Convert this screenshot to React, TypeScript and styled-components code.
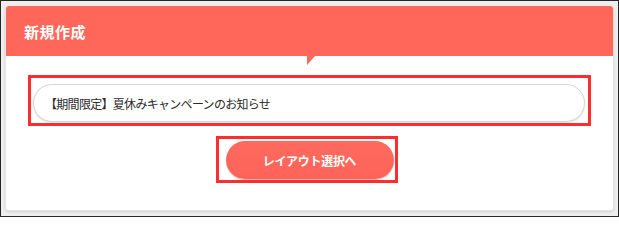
import React from 'react';
import styled, {createGlobalStyle} from 'styled-components';

const GlobalStyle = createGlobalStyle`
    html, body {
        margin: 0;
        padding: 0;
        background: #ffffff;
    }
    * {
        box-sizing: border-box;
    }
`;

const App = () => {
    return <Page>
        <GlobalStyle/>
        <Card>
            <CardHeader>
                <CardTitle>新規作成</CardTitle>
            </CardHeader>

            <CardBody>
                <Highlight pad="6px 3px 1px 2px">
                    <TitleInput defaultValue="【期間限定】夏休みキャンペーンのお知らせ" readOnly/>
                </Highlight>

                <ButtonRow>
                    <Highlight pad="2px 1px 1px 7px">
                        <NextButton type="button">レイアウト選択へ</NextButton>
                    </Highlight>
                </ButtonRow>
            </CardBody>
        </Card>
    </Page>;
};

export default App;


const coral = '#ff675b';

const Page = styled.div`
    width: 619px;
    height: 217px;
    border: 1px solid #262626;
    background: #efefef;
    padding: 5px 4px 5px 4px;
    font-family: "Noto Sans CJK JP", "Noto Sans", sans-serif;
`;

const Card = styled.div`
    height: 205px;
    background: #ffffff;
    border: 1px solid #e3e3e3;
    border-top: 0;
    border-radius: 3px;
    box-shadow: 0 1px 3px rgba(0, 0, 0, 0.12);
`;

const CardHeader = styled.div`
    position: relative;
    height: 50px;
    display: flex;
    align-items: center;
    padding-left: 18px;
    background: ${coral};
    border-radius: 3px 3px 0 0;

    &::after {
        content: '';
        position: absolute;
        left: 301px;
        bottom: -9px;
        width: 0;
        height: 0;
        border-top: 9px solid ${coral};
        border-right: 8px solid transparent;
    }
`;

const CardTitle = styled.h2`
    margin: 0;
    font-size: 15px;
    font-weight: 700;
    color: #ffffff;
    letter-spacing: 0.5px;
`;

const CardBody = styled.div`
    display: flex;
    flex-direction: column;
    gap: 10px;
    padding: 19px 22px 0 22px;
`;

const Highlight = styled.div<{pad: string}>`
    border: 3px solid #ff2d2d;
    padding: ${p => p.pad};
    background: #ffffff;
`;

const TitleInput = styled.input`
    display: block;
    width: 100%;
    height: 38px;
    padding: 0 12px 0 11px;
    border: 1px solid #d6d6d6;
    border-radius: 19px;
    box-shadow: 0 1px 2px rgba(0, 0, 0, 0.12);
    font-family: "Noto Sans CJK JP", "Noto Sans", sans-serif;
    font-size: 12px;
    letter-spacing: -0.7px;
    color: #2b2b2b;
    outline: none;
`;

const ButtonRow = styled.div`
    display: flex;
    justify-content: center;
    padding-right: 6px;
`;

const NextButton = styled.button`
    display: block;
    width: 168px;
    height: 38px;
    border: 0;
    border-radius: 19px;
    background: linear-gradient(to bottom, #ff6a5e 0%, #ff6358 100%);
    box-shadow: 0 1px 1px rgba(180, 40, 30, 0.35);
    color: #ffffff;
    font-family: "Noto Sans CJK JP", "Noto Sans", sans-serif;
    font-size: 12px;
    font-weight: 700;
    letter-spacing: -0.3px;
    cursor: pointer;
`;
